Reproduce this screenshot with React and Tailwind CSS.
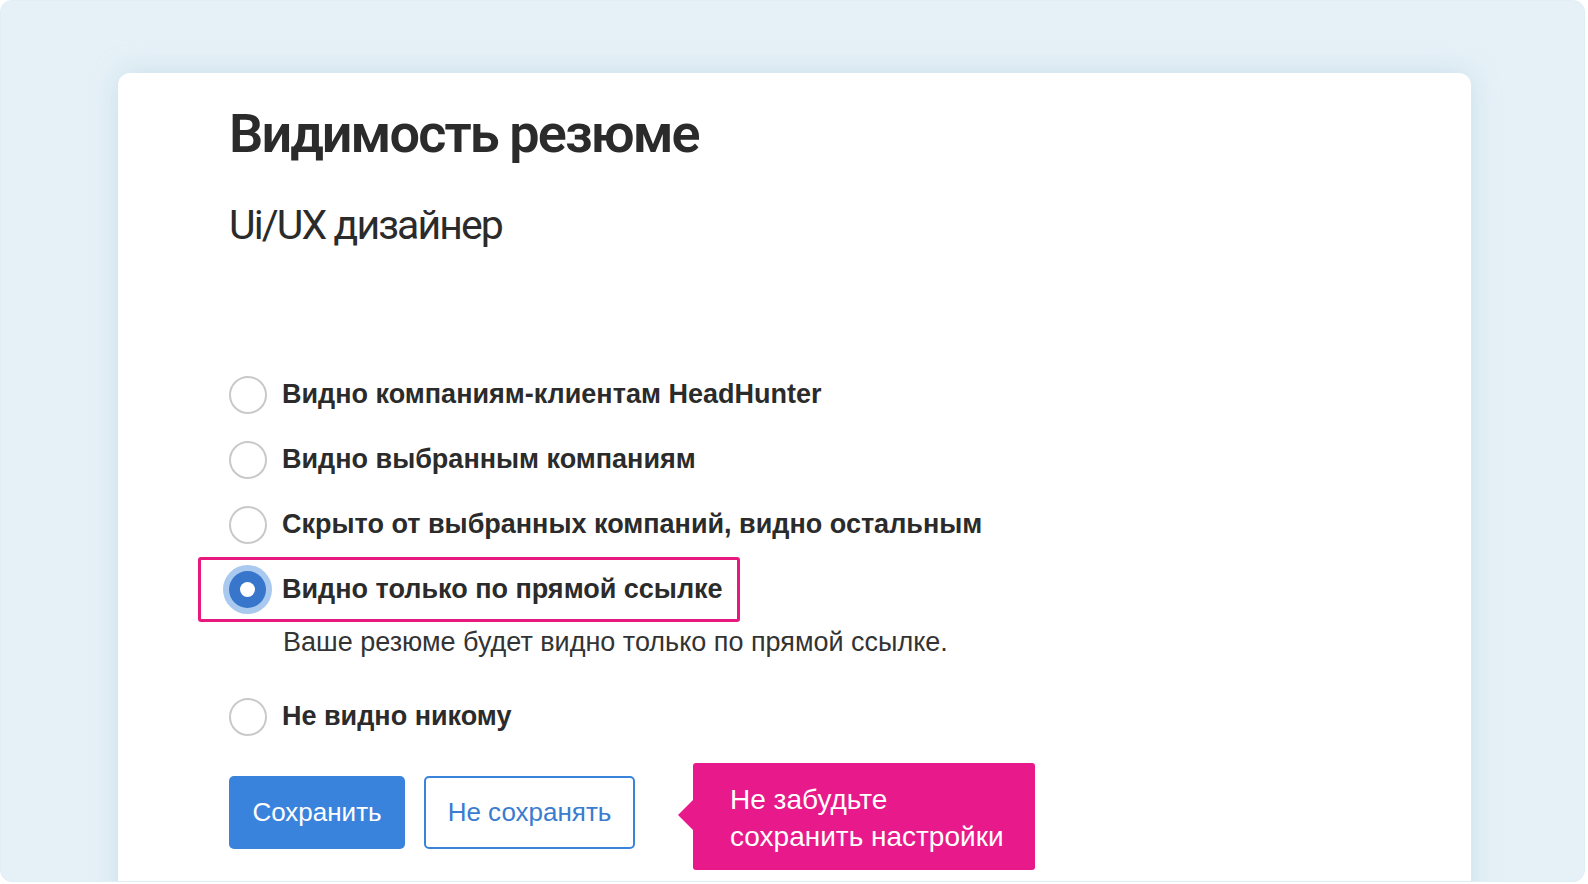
import React, { useState } from 'react';

const options = [
  { id: 'all', label: 'Видно компаниям-клиентам HeadHunter' },
  { id: 'selected', label: 'Видно выбранным компаниям' },
  { id: 'hidden', label: 'Скрыто от выбранных компаний, видно остальным' },
  { id: 'link', label: 'Видно только по прямой ссылке', hint: 'Ваше резюме будет видно только по прямой ссылке.' },
  { id: 'none', label: 'Не видно никому' },
];

const Radio = ({ checked }) =>
  checked ? (
    <span className="flex h-[49px] w-[49px] shrink-0 items-center justify-center rounded-full bg-[#a9c9ef]">
      <span className="flex h-[37px] w-[37px] items-center justify-center rounded-full bg-[#3876cc]">
        <span className="h-[15px] w-[15px] rounded-full bg-white" />
      </span>
    </span>
  ) : (
    <span className="flex h-[49px] w-[49px] shrink-0 items-center justify-center">
      <span className="h-[38px] w-[38px] rounded-full border-2 border-[#c9c9c9] bg-white" />
    </span>
  );

export default function App() {
  const [value, setValue] = useState('link');

  return (
    <div className="h-[884px] w-[1588px] overflow-hidden bg-white">
      <div className="h-[882px] w-[1585px] overflow-hidden rounded-[12px] border border-[#e0eef6] bg-[#e6f1f7] pl-[117px] pt-[72px]">
        <div className="h-[900px] w-[1353px] rounded-t-[12px] bg-white pl-[111px] pt-[26px] shadow-[0_0_28px_rgba(150,190,215,0.35)]">
          <h1 className="text-[54px] font-semibold leading-[70px] tracking-[-1.9px] text-[#2b2b2b] [font-family:Roboto,'Noto_Sans',sans-serif]">
            Видимость резюме
          </h1>
          <h2 className="mt-[29px] text-[41px] font-normal leading-[54px] tracking-[-1.9px] text-[#2b2b2b] [font-family:Roboto,'Noto_Sans',sans-serif]">
            Ui/UX дизайнер
          </h2>

          <div className="mt-[110px] flex flex-col [font-family:'Liberation_Sans',Arial,sans-serif]">
            {options.map((o) => {
              const checked = value === o.id;
              return (
                <div key={o.id} className={o.hint ? 'mb-[27px]' : ''}>
                  <label
                    className={`-ml-[31px] flex h-[65px] w-fit cursor-pointer items-center gap-[10px] rounded-[3px] border-[3px] pl-[22px] pr-[14px] ${
                      checked ? 'border-[#e8197e]' : 'border-transparent'
                    }`}
                    onClick={() => setValue(o.id)}
                  >
                    <Radio checked={checked} />
                    <span className="text-[27px] font-bold text-[#2b2b2b]">{o.label}</span>
                  </label>
                  {o.hint && checked && (
                    <p className="ml-[54px] mt-[5px] text-[27px] leading-[30px] text-[#333]">{o.hint}</p>
                  )}
                </div>
              );
            })}
          </div>

          <div className="mt-[14px] flex items-start [font-family:'Liberation_Sans',Arial,sans-serif]">
            <button className="mt-[13px] h-[73px] w-[176px] rounded-[5px] bg-[#3a83dd] text-[26px] text-white">
              Сохранить
            </button>
            <button className="ml-[19px] mt-[13px] h-[73px] w-[211px] rounded-[5px] border-2 border-[#3a83dd] bg-white text-[26px] text-[#3a7ccf]">
              Не сохранять
            </button>
            <div className="relative ml-[58px] flex h-[107px] w-[342px] flex-col justify-center rounded-[3px] bg-[#e8198a] pl-[37px] pt-[2px] text-[28px] leading-[37px] text-white">
              <span className="absolute left-[-15px] top-[37px] h-0 w-0 border-y-[15px] border-r-[15px] border-y-transparent border-r-[#e8198a]" />
              <span>Не забудьте</span>
              <span>сохранить настройки</span>
            </div>
          </div>
        </div>
      </div>
    </div>
  );
}
